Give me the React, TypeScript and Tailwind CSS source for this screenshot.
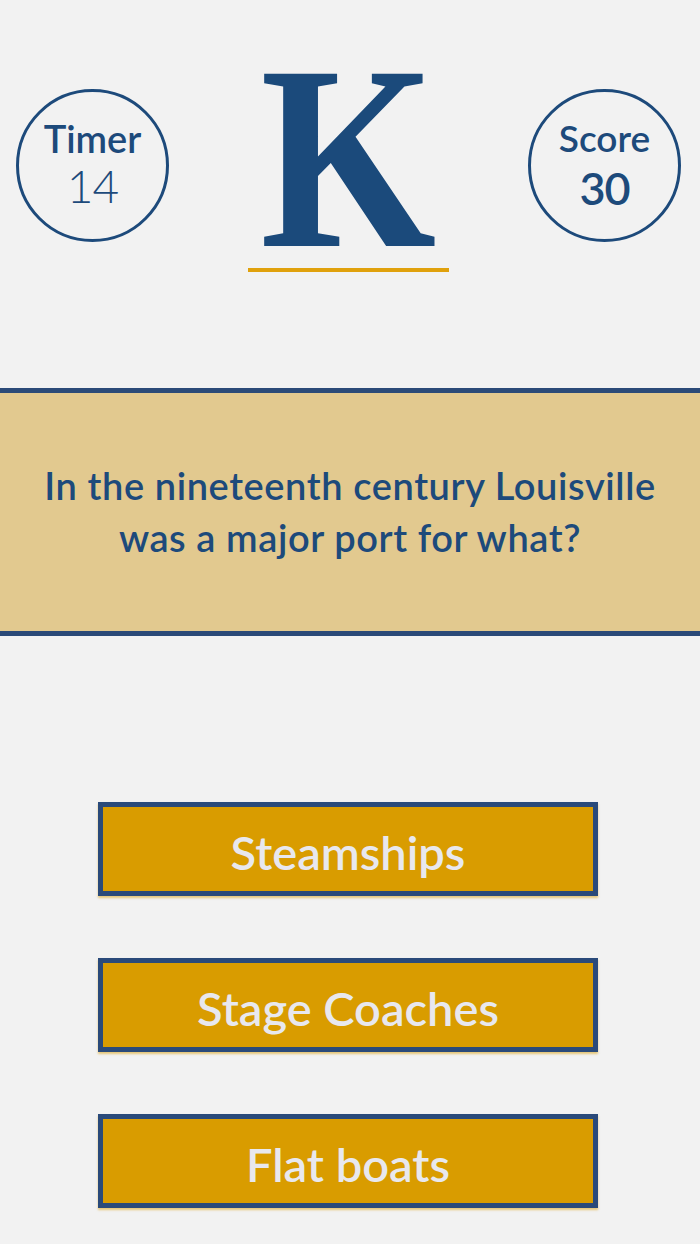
import React from "react";

const sans = { fontFamily: "Lato, 'Noto Sans', sans-serif" };

export default function App() {
  const answers = ["Steamships", "Stage Coaches", "Flat boats"];
  return (
    <div className="w-[700px] h-[1244px] bg-[#f2f2f2] overflow-hidden" style={sans}>
      <div className="flex items-start justify-between pl-[16px] pr-[19px] pt-[72px]">
        <div className="mt-[17px] w-[153px] h-[153px] rounded-full border-[3px] border-[#1d4a7b] flex flex-col items-center text-[#1d4a7b]">
          <div className="text-[38px] font-semibold leading-none mt-[27px]">Timer</div>
          <div className="text-[46px] font-light leading-none mt-[6px] tracking-[-1px]">14</div>
        </div>
        <div className="flex flex-col items-center">
          <div className="h-[176px] w-[200px] flex items-center justify-center overflow-visible">
            <span
              className="block text-[#1b4a7b] font-bold leading-none scale-x-[0.86] mt-[-5px]"
              style={{ fontFamily: "'Liberation Serif', serif", fontSize: "263px" }}
            >
              K
            </span>
          </div>
          <div className="mt-[20px] w-[201px] h-[4px] bg-[#e0a10c]" />
        </div>
        <div className="mt-[17px] w-[153px] h-[153px] rounded-full border-[3px] border-[#1d4a7b] flex flex-col items-center text-[#1d4a7b]">
          <div className="text-[37px] font-semibold leading-none mt-[27px]">Score</div>
          <div className="text-[45px] font-semibold leading-none mt-[10px] tracking-[-1px]">30</div>
        </div>
      </div>

      <div className="mt-[116px] border-y-[5px] border-[#2b4a78] bg-[#e2c98f] h-[248px] flex items-center justify-center">
        <p className="text-center text-[#1d4a7b] text-[38px] font-semibold leading-[52px] tracking-[0.6px] mt-[-2px]">
          In the nineteenth century Louisville
          <br />
          was a major port for what?
        </p>
      </div>

      <div className="mt-[166px] flex flex-col items-center gap-[62px] pr-[4px]">
        {answers.map((a) => (
          <div
            key={a}
            className="w-[500px] h-[94px] border-[5px] border-[#2a4a7a] bg-[#d99c00] flex items-center justify-center shadow-[0_2px_2px_rgba(217,156,0,0.5)]"
          >
            <span className="text-[#e8e8ee] text-[47px] font-semibold leading-none mt-[6px]">{a}</span>
          </div>
        ))}
      </div>
    </div>
  );
}
